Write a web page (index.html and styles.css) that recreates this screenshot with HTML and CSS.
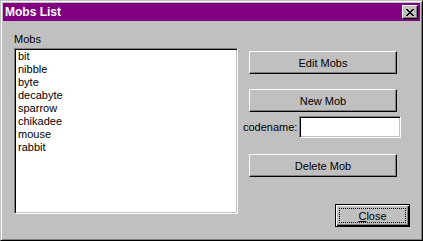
FILE: index.html
```html
<!DOCTYPE html>
<html lang="en">
<head>
    <meta charset="UTF-8">
    <meta name="viewport" content="width=device-width, initial-scale=1.0">
    <title>Mobs List</title>
    <link rel="stylesheet" href="styles.css">
</head>
<body>
    <div class="window">
        <div class="titlebar">
            <span class="title">Mobs List</span>
            <button class="title-close" type="button">
                <svg width="8" height="7" viewBox="0 0 8 7" shape-rendering="crispEdges">
                    <path d="M0 0h2v1h-2zM6 0h2v1h-2zM1 1h2v1h-2zM5 1h2v1h-2zM2 2h4v1h-4zM3 3h2v1h-2zM2 4h4v1h-4zM1 5h2v1h-2zM5 5h2v1h-2zM0 6h2v1h-2zM6 6h2v1h-2z" fill="#000"/>
                </svg>
            </button>
        </div>
        <div class="dialog-body">
            <div class="list-col">
                <label class="label">Mobs</label>
                <ul class="listbox">
                    <li>bit</li>
                    <li>nibble</li>
                    <li>byte</li>
                    <li>decabyte</li>
                    <li>sparrow</li>
                    <li>chikadee</li>
                    <li>mouse</li>
                    <li>rabbit</li>
                </ul>
            </div>
            <div class="side-col">
                <button class="btn wide edit-btn" type="button">Edit Mobs</button>
                <button class="btn wide new-btn" type="button">New Mob</button>
                <div class="codename-row">
                    <label class="codename-label" for="codename">codename:</label>
                    <input class="field" id="codename" type="text">
                </div>
                <button class="btn wide delete-btn" type="button">Delete Mob</button>
                <button class="btn default-btn" type="button"><span class="focus-rect"><u>C</u>lose</span></button>
            </div>
        </div>
    </div>
</body>
</html>
```

FILE: styles.css
```css
body {
    margin: 0;
    padding: 0;
    background: #c0c0c0;
    font-family: 'Liberation Sans', Arial, sans-serif;
    font-size: 11px;
    color: #000;
}

.window {
    width: 423px;
    height: 241px;
    box-sizing: border-box;
    background: #c0c0c0;
    border: 1px solid;
    border-color: #c0c0c0 #000 #000 #c0c0c0;
    box-shadow: inset 1px 1px #fff, inset -1px -1px #808080;
    padding: 2px;
}

.titlebar {
    height: 18px;
    background: #800080;
    display: flex;
    align-items: center;
    padding-left: 2px;
}

.title {
    color: #fff;
    font-weight: bold;
    font-size: 12px;
    line-height: 18px;
}

.title-close {
    margin-left: auto;
    margin-right: 2px;
    width: 16px;
    height: 14px;
    padding: 0;
    box-sizing: border-box;
    background: #c0c0c0;
    border: 1px solid;
    border-color: #fff #000 #000 #fff;
    box-shadow: inset -1px -1px #808080;
    display: flex;
    align-items: center;
    justify-content: center;
}

.title-close svg {
    display: block;
}

.dialog-body {
    display: flex;
    padding: 12px 0 0 11px;
}

.list-col {
    display: flex;
    flex-direction: column;
    width: 224px;
}

.label {
    line-height: 13px;
    margin-bottom: 2px;
}

.listbox {
    margin: 0;
    list-style: none;
    height: 166px;
    box-sizing: border-box;
    background: #fff;
    border: 1px solid;
    border-color: #808080 #fff #fff #808080;
    box-shadow: inset 1px 1px #000, inset -1px -1px #c0c0c0;
    padding: 1px 0 0 3px;
}

.listbox li {
    line-height: 13px;
}

.side-col {
    display: flex;
    flex-direction: column;
    align-items: flex-start;
    width: 167px;
    margin-left: 5px;
}

.btn {
    font-family: 'Liberation Sans', Arial, sans-serif;
    font-size: 11px;
    color: #000;
    background: #c0c0c0;
    height: 23px;
    padding: 0;
    box-sizing: border-box;
    border: 1px solid;
    border-color: #fff #000 #000 #fff;
    box-shadow: inset -1px -1px #808080;
}

.wide {
    width: 148px;
    margin-left: 6px;
}

.edit-btn {
    margin-top: 18px;
}

.new-btn {
    margin-top: 15px;
}

.codename-row {
    display: flex;
    align-items: center;
    margin-top: 4px;
}

.codename-label {
    width: 56px;
    line-height: 13px;
}

.field {
    width: 102px;
    height: 22px;
    box-sizing: border-box;
    margin: 0;
    padding: 0 3px;
    font-family: 'Liberation Sans', Arial, sans-serif;
    font-size: 11px;
    background: #fff;
    border: 1px solid;
    border-color: #808080 #fff #fff #808080;
    box-shadow: inset 1px 1px #000, inset -1px -1px #c0c0c0;
    outline: none;
}

.delete-btn {
    margin-top: 16px;
}

.default-btn {
    align-self: flex-end;
    margin-top: 27px;
    width: 75px;
    border: 1px solid #000;
    box-shadow: inset 1px 1px #fff, inset -1px -1px #000, inset -2px -2px #808080;
    display: flex;
    padding: 3px;
}

.focus-rect {
    flex: 1;
    border: 1px dotted #000;
    display: flex;
    align-items: center;
    justify-content: center;
}
```
